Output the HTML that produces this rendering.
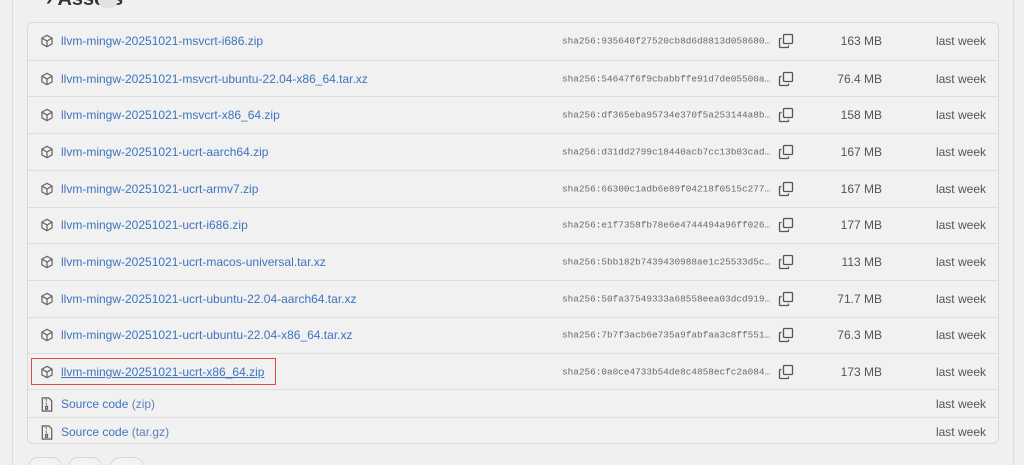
<!DOCTYPE html>
<html><head><meta charset="utf-8"><style>
*{margin:0;padding:0;box-sizing:border-box}
html,body{width:1024px;height:465px;overflow:hidden}
body{background:#efefef;font-family:"Liberation Sans",sans-serif;position:relative}
.outer{position:absolute;left:12px;top:-10px;width:1002px;height:475px;border-left:1px solid #dcdcdc;border-right:1px solid #dcdcdc;background:#f0f0f0}
.hdr{position:absolute;left:46px;top:-12px;font-size:20px;font-weight:bold;color:#333}
.card{position:absolute;left:27px;top:22px;width:972px;height:422px;border:1px solid #d8d8d8;border-radius:6px;background:#f1f1f1;overflow:hidden}
.row{position:absolute;left:0;width:970px;border-top:1px solid #dedede}
.row:first-child{border-top:none}
.ic{position:absolute;left:12px;top:50%;margin-top:-7px}
.name{position:absolute;left:33px;top:50%;transform:translateY(-50%);font-size:12px;color:#3d74c0;white-space:nowrap}
.sha{position:absolute;left:534px;top:50%;transform:translateY(-50%);font-family:"Liberation Mono",monospace;font-size:9.4px;color:#6a6a6a;white-space:nowrap;width:208px;overflow:hidden}
.cp{position:absolute;left:750px;top:50%;margin-top:-8px}
.size{position:absolute;right:116px;top:50%;transform:translateY(-50%);font-size:12px;color:#555}
.date{position:absolute;right:12px;top:50%;transform:translateY(-50%);font-size:12px;color:#555}
.gray{color:#5a82b8}
.sel{position:absolute;left:31px;top:358px;width:245px;height:27px;border:1.5px solid #e04848}
.btn{position:absolute;top:457px;height:20px;border:1px solid #d6d6d6;border-radius:10px;background:#f3f3f3}
</style></head><body>
<div class="outer"></div>
<div class="hdr">› Assets</div>
<div style="position:absolute;left:98px;top:-8px;width:20px;height:16px;border-radius:8px;background:#e2e2e2"></div>
<div class="card"></div>
<div class="sel"></div>
<div class="btn" style="left:28px;width:34px"></div>
<div class="btn" style="left:68px;width:34px"></div>
<div class="btn" style="left:110px;width:34px"></div>
<script>
var rows=[
["llvm-mingw-20251021-msvcrt-i686.zip","sha256:935640f27520cb8d6d8813d058680…","163 MB"],
["llvm-mingw-20251021-msvcrt-ubuntu-22.04-x86_64.tar.xz","sha256:54647f6f9cbabbffe91d7de05500a…","76.4 MB"],
["llvm-mingw-20251021-msvcrt-x86_64.zip","sha256:df365eba95734e370f5a253144a8b…","158 MB"],
["llvm-mingw-20251021-ucrt-aarch64.zip","sha256:d31dd2799c18440acb7cc13b03cad…","167 MB"],
["llvm-mingw-20251021-ucrt-armv7.zip","sha256:66300c1adb6e89f04218f0515c277…","167 MB"],
["llvm-mingw-20251021-ucrt-i686.zip","sha256:e1f7358fb78e6e4744494a96ff026…","177 MB"],
["llvm-mingw-20251021-ucrt-macos-universal.tar.xz","sha256:5bb182b7439430988ae1c25533d5c…","113 MB"],
["llvm-mingw-20251021-ucrt-ubuntu-22.04-aarch64.tar.xz","sha256:50fa37549333a68558eea03dcd919…","71.7 MB"],
["llvm-mingw-20251021-ucrt-ubuntu-22.04-x86_64.tar.xz","sha256:7b7f3acb6e735a9fabfaa3c8ff551…","76.3 MB"],
["llvm-mingw-20251021-ucrt-x86_64.zip","sha256:0a0ce4733b54de8c4858ecfc2a084…","173 MB"]];
var box='<svg class="ic" width="14" height="14" viewBox="0 0 16 16" fill="none" stroke="#666" stroke-width="1.4"><path d="M8 1.5l5.8 3.2v6.6L8 14.5l-5.8-3.2V4.7z"/><path d="M2.4 4.8L8 8l5.6-3.2M8 8v6.3"/></svg>';
var cp='<svg class="cp" width="16" height="16" viewBox="0 0 16 16" fill="none" stroke="#555" stroke-width="1.3"><rect x="5.5" y="1.5" width="9" height="9" rx="1"/><path d="M3.5 5.5h-1a1 1 0 0 0-1 1v7a1 1 0 0 0 1 1h7a1 1 0 0 0 1-1v-1"/></svg>';
var zip='<svg class="ic" width="14" height="15" viewBox="0 0 14 16" fill="none" stroke="#666" stroke-width="1.4"><path d="M2 1h7l3 3v11H2z"/><path d="M6 2v1M6 4h1M6 6v1M6 8h1M5.5 10h2v3h-2z"/></svg>';
var h='',y=0;
rows.forEach(function(r,i){var hh=36.7;h+='<div class="row" style="top:'+y+'px;height:'+hh+'px">'+box+'<span class="name"'+(i==9?' style="text-decoration:underline"':'')+'>'+r[0]+'</span><span class="sha">'+r[1]+'</span>'+cp+'<span class="size">'+r[2]+'</span><span class="date">last week</span></div>';y+=hh;});
[["zip",366],["tar.gz",394]].forEach(function(s){h+='<div class="row" style="top:'+s[1]+'px;height:28px">'+zip+'<span class="name">Source code <span class="gray">('+s[0]+')</span></span><span class="date">last week</span></div>';});
document.querySelector('.card').innerHTML=h;
</script>
</body></html>
